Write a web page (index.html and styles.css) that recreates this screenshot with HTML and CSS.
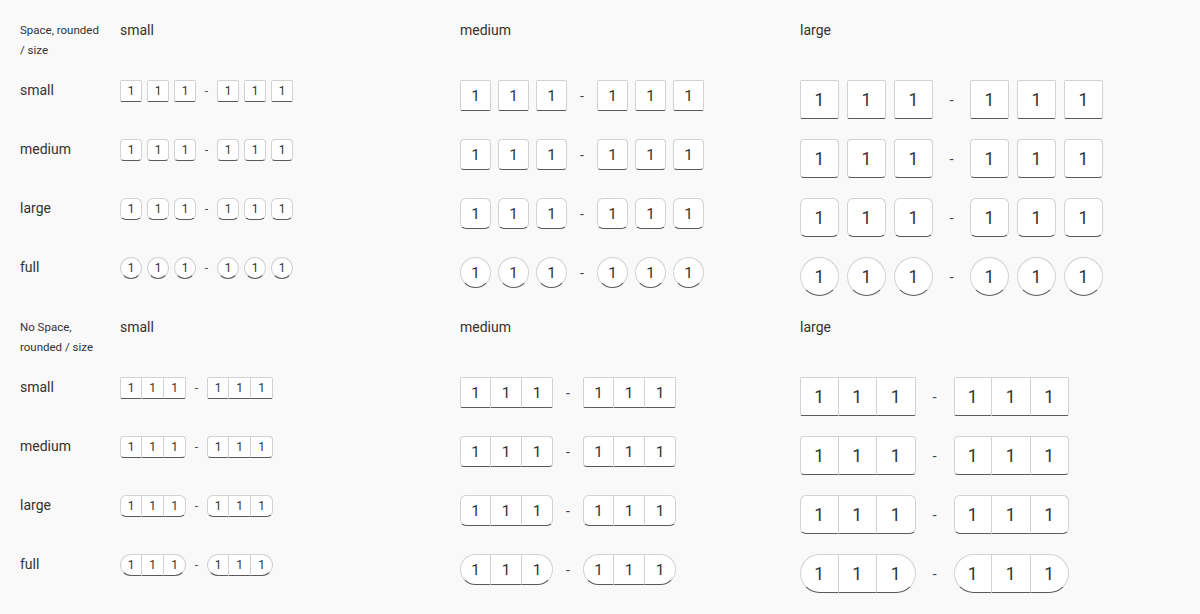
FILE: index.html
```html
<!DOCTYPE html>
<html>
<head>
<meta charset="utf-8">
<link rel="stylesheet" href="styles.css">
</head>
<body>
<div class="page">
  <section class="grid spaced" id="s1"></section>
  <section class="grid joined" id="s2"></section>
</div>
<script src="app.js"></script>
</body>
</html>
```

FILE: styles.css
```css
html, body {
  margin: 0;
  padding: 0;
  background: #f9f9f9;
}
body {
  font-family: Roboto, "Noto Sans", sans-serif;
  color: #333;
}
.page {
  padding: 20px;
  display: flex;
  flex-direction: column;
  gap: 21px;
}
.grid {
  display: grid;
  grid-template-columns: 100px 340px 340px 340px;
  row-gap: 20px;
  align-items: start;
}
.caption {
  font-size: 11.5px;
  line-height: 20px;
  padding-right: 14px;
}
.head, .label {
  font-size: 14px;
  line-height: 20px;
}
.row {
  display: flex;
  align-items: center;
}
.pins {
  display: flex;
}
.pin {
  box-sizing: border-box;
  display: flex;
  align-items: center;
  justify-content: center;
  background: #fff;
  border: 1px solid #d2d2d2;
  border-bottom-color: #5a5a5a;
  color: #333;
}
.sep {
  text-align: center;
  color: #444;
}

/* sizes */
.sz-small .pin { width: 22px; height: 22px; font-size: 12px; }
.sz-medium .pin { width: 31px; height: 31px; font-size: 15.5px; }
.sz-large .pin { width: 39px; height: 39px; font-size: 17.5px; }
.sz-small .sep { width: 21px; font-size: 12px; }
.sz-medium .sep { width: 30px; font-size: 14px; }
.sz-large .sep { width: 37px; font-size: 15px; }
.joined .sz-large .sep { width: 38px; }

.spaced .sz-small .pins { gap: 5px; }
.spaced .sz-medium .pins { gap: 7px; }
.spaced .sz-large .pins { gap: 8px; }

/* radius, spaced */
.spaced .r-small .pin { border-radius: 2px; }
.spaced .r-medium .pin { border-radius: 4px; }
.spaced .r-large .pin { border-radius: 6px; }
.spaced .r-full .pin { border-radius: 50%; }

/* joined */
.joined .pin + .pin { border-left: none; }
.joined .sz-large .pin { width: 38.5px; }
.joined .r-small .pin:first-child { border-radius: 2px 0 0 2px; }
.joined .r-small .pin:last-child { border-radius: 0 2px 2px 0; }
.joined .r-medium .pin:first-child { border-radius: 4px 0 0 4px; }
.joined .r-medium .pin:last-child { border-radius: 0 4px 4px 0; }
.joined .r-large .pin:first-child { border-radius: 6px 0 0 6px; }
.joined .r-large .pin:last-child { border-radius: 0 6px 6px 0; }
.joined .r-full .pin:first-child { border-radius: 999px 0 0 999px; }
.joined .r-full .pin:last-child { border-radius: 0 999px 999px 0; }
```

FILE: app.js
```js
(function () {
  var sizes = ["small", "medium", "large"];
  var rads = ["small", "medium", "large", "full"];
  function group() {
    var h = '<div class="pins">';
    for (var i = 0; i < 3; i++) h += '<div class="pin">1</div>';
    return h + '</div>';
  }
  function build(el, caption) {
    var h = '<div class="caption">' + caption + '</div>';
    sizes.forEach(function (s) { h += '<div class="head">' + s + '</div>'; });
    rads.forEach(function (r) {
      h += '<div class="label">' + r + '</div>';
      sizes.forEach(function (s) {
        h += '<div class="row sz-' + s + ' r-' + r + '">' + group() + '<div class="sep">-</div>' + group() + '</div>';
      });
    });
    el.innerHTML = h;
  }
  build(document.getElementById("s1"), "Space, rounded / size");
  build(document.getElementById("s2"), "No Space, rounded / size");
})();
```
